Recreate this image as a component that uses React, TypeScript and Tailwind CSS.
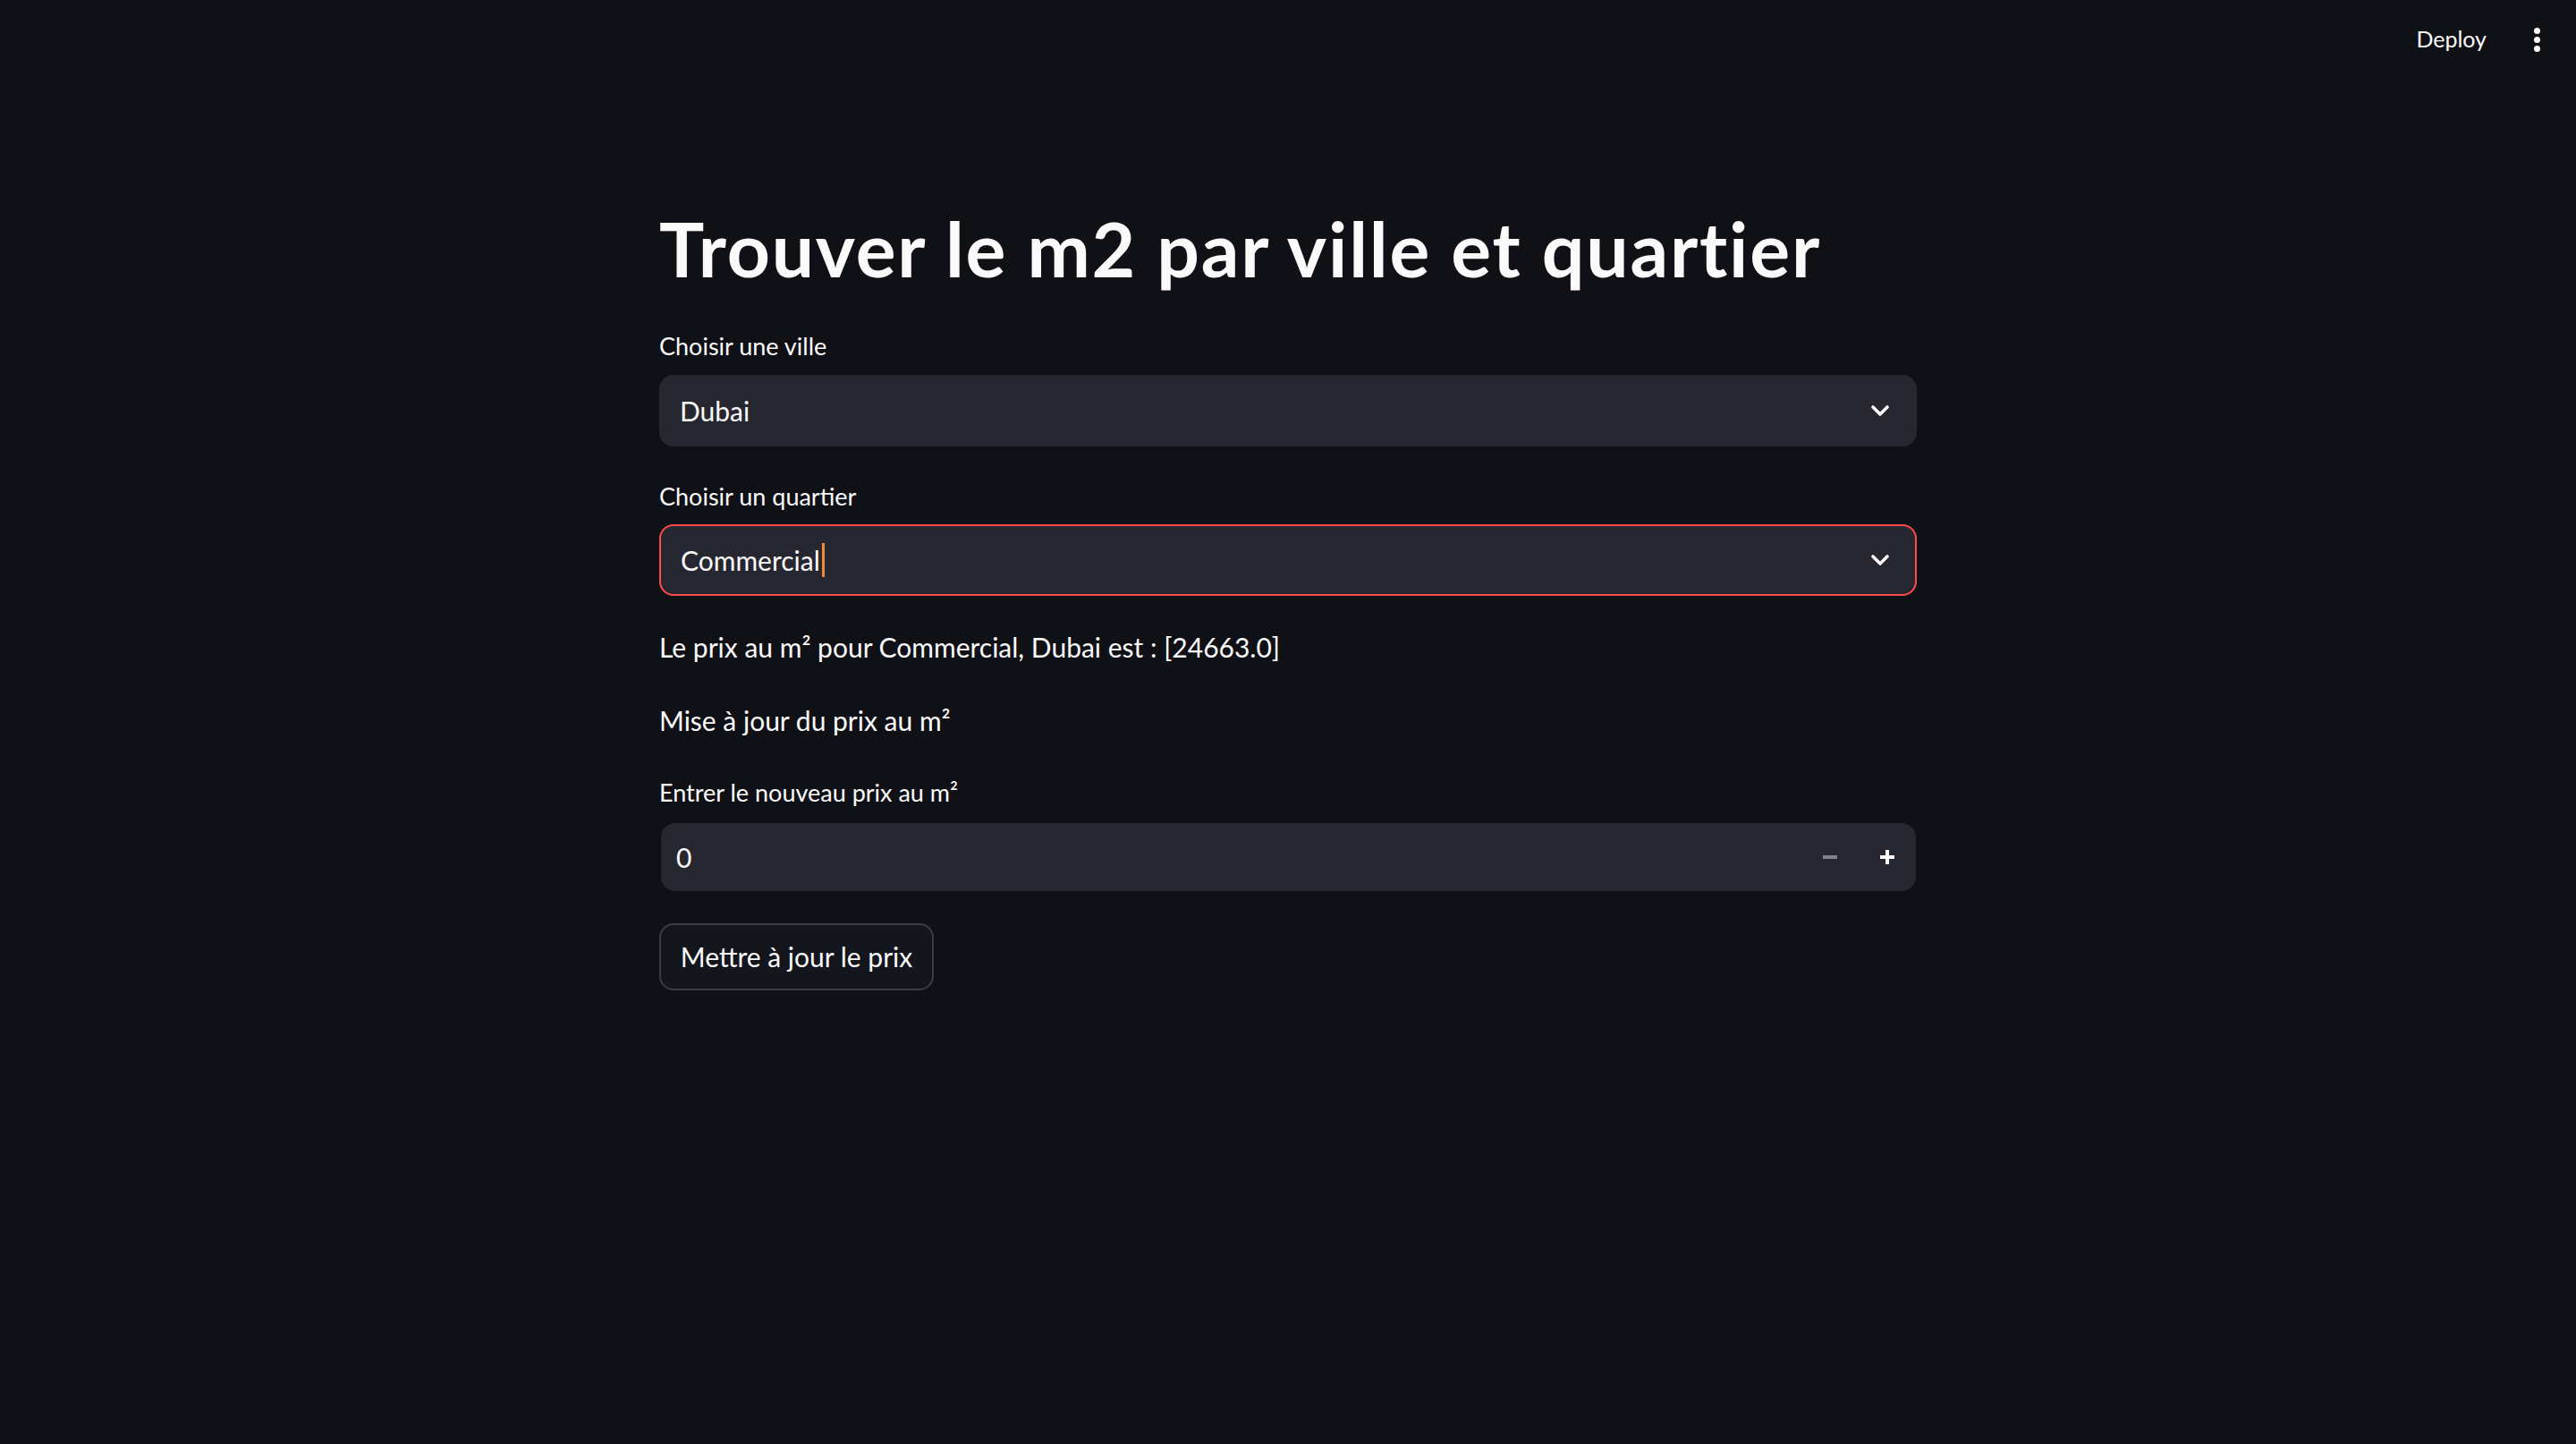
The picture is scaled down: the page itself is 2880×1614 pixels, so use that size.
import { ReactElement } from 'react'

function Chevron(): ReactElement {
    return (
        <svg width="22" height="14" viewBox="0 0 22 14" fill="none" className="shrink-0">
            <polyline points="3,3 11,11 19,3" stroke="#fafafa" strokeWidth="3.6" strokeLinecap="round" strokeLinejoin="round" />
        </svg>
    )
}

function Label({ children, className = '' }: { children: string; className?: string }): ReactElement {
    return <div className={`text-[27px] leading-[32px] text-[#fafafa] ${className}`}>{children}</div>
}

export default function App(): ReactElement {
    return (
        <div className="min-h-screen bg-[#101117] font-['Lato',sans-serif] text-[#fafafa]">
            {/* top header */}
            <div className="flex h-[88px] items-center justify-end pr-[40px]">
                <span className="text-[25px] text-[#fafafa]">Deploy</span>
                <div className="ml-[53px] flex flex-col items-center gap-[3px]">
                    <span className="h-[7px] w-[7px] rounded-full bg-[#fafafa]" />
                    <span className="h-[7px] w-[7px] rounded-full bg-[#fafafa]" />
                    <span className="h-[7px] w-[7px] rounded-full bg-[#fafafa]" />
                </div>
            </div>

            <main className="mx-auto flex w-[1406px] flex-col pt-[141px]">
                <h1 className="text-[84px] font-bold leading-[97px] tracking-[1.8px]">Trouver le m2 par ville et quartier</h1>

                <Label className="mt-[45px]">Choisir une ville</Label>
                <div className="mt-[16px] flex h-[80px] items-center justify-between rounded-[16px] bg-[#262730] pl-[23px] pr-[30px]">
                    <span className="text-[30px]">Dubai</span>
                    <Chevron />
                </div>

                <Label className="mt-[40px]">Choisir un quartier</Label>
                <div className="mt-[15px] flex h-[80px] items-center justify-between rounded-[16px] border-2 border-[#ff4b4b] bg-[#262730] pl-[22px] pr-[28px]">
                    <div className="flex items-center">
                        <span className="text-[30px]">Commercial</span>
                        <span className="ml-[2px] h-[38px] w-[3px] bg-[#ee8a3a]" />
                    </div>
                    <Chevron />
                </div>

                <p className="mt-[39px] text-[30px] leading-[36px]">Le prix au m² pour Commercial, Dubai est : [24663.0]</p>
                <p className="mt-[46px] text-[30px] leading-[36px]">Mise à jour du prix au m²</p>

                <Label className="mt-[47px]">Entrer le nouveau prix au m²</Label>
                <div className="ml-[2px] mr-[1px] mt-[18px] flex h-[76px] items-center rounded-[16px] bg-[#262730] pl-[17px]">
                    <span className="flex-1 text-[30px]">0</span>
                    <span className="h-[4px] w-[16px] bg-[#7f8190]" />
                    <svg width="16" height="16" viewBox="0 0 16 16" className="ml-[48px] mr-[24px]">
                        <rect x="6" y="0" width="4" height="16" fill="#fafafa" />
                        <rect x="0" y="6" width="16" height="4" fill="#fafafa" />
                    </svg>
                </div>

                <button className="mt-[36px] h-[75px] w-[307px] rounded-[16px] border-2 border-[#3b3d44] bg-[#14161d] text-[30px] text-[#fafafa]">
                    Mettre à jour le prix
                </button>
            </main>
        </div>
    )
}
